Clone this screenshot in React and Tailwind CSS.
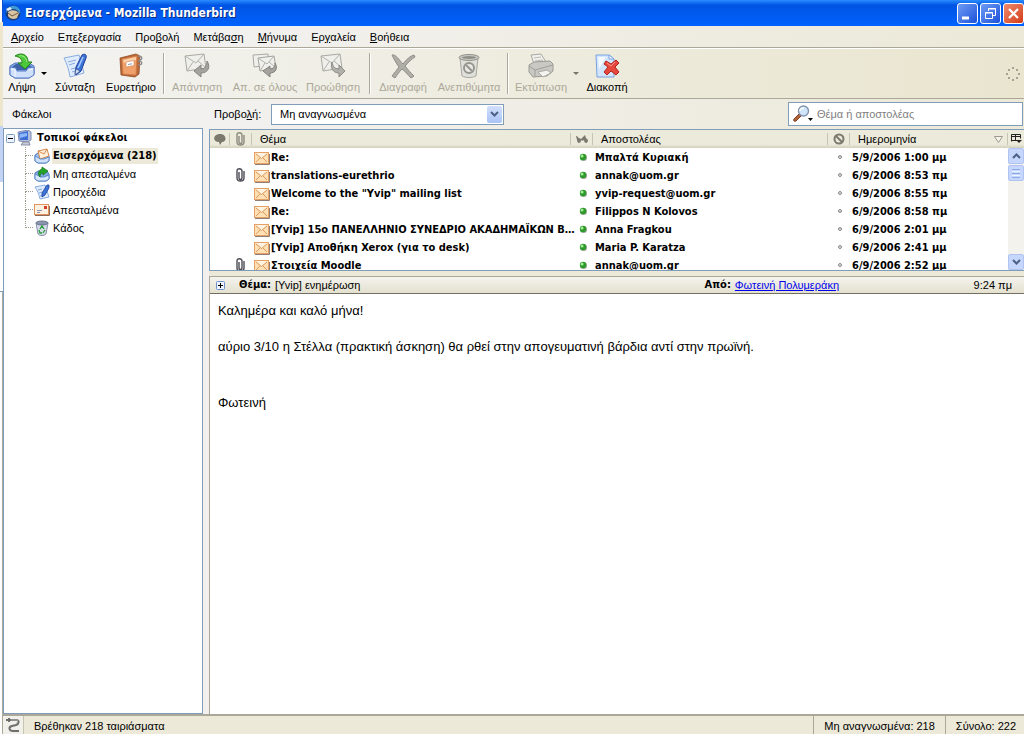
import React from "react";

const menuItems = [
  { before: "", key: "Α", after: "ρχείο" },
  { before: "Επ", key: "ε", after: "ξεργασία" },
  { before: "Προ", key: "β", after: "ολή" },
  { before: "Μετάβα", key: "σ", after: "η" },
  { before: "", key: "Μ", after: "ήνυμα" },
  { before: "Ερ", key: "γ", after: "αλεία" },
  { before: "", key: "Β", after: "οήθεια" },
];

const messages = [
  { id: 1, clip: false, subject: "Re:", sender: "Μπαλτά Κυριακή", date: "5/9/2006 1:00 μμ" },
  { id: 2, clip: true, subject: "translations-eurethrio", sender: "annak@uom.gr", date: "6/9/2006 8:53 πμ" },
  { id: 3, clip: false, subject: 'Welcome to the "Yvip" mailing list', sender: "yvip-request@uom.gr", date: "6/9/2006 8:55 πμ" },
  { id: 4, clip: false, subject: "Re:", sender: "Filippos N Kolovos", date: "6/9/2006 8:58 πμ" },
  { id: 5, clip: false, subject: "[Yvip] 15ο ΠΑΝΕΛΛΗΝΙΟ ΣΥΝΕΔΡΙΟ ΑΚΑΔΗΜΑΪΚΩΝ Β…", sender: "Anna Fragkou", date: "6/9/2006 2:01 μμ" },
  { id: 6, clip: false, subject: "[Yvip] Αποθήκη Xerox (για το desk)", sender: "Maria P. Karatza", date: "6/9/2006 2:41 μμ" },
  { id: 7, clip: true, subject: "Στοιχεία Moodle", sender: "annak@uom.gr", date: "6/9/2006 2:52 μμ" },
];

/* ---------- Toolbar icons, 26x26 ---------- */

const GetMailIcon = () => (
  <svg width="26" height="26" viewBox="0 0 26 26">
    <path d="M1 13 6 10h14l5 3v8l-5 4H6l-5-3z" fill="#86abe4" stroke="#5478c4" />
    <path d="M3 14l4-3h12l4 3-3 3H7z" fill="#3f62a8" />
    <path d="M1 14l6 1 1 3h9l2-3 6-1v8l-5 3H6l-5-3z" fill="#cfe1fa" stroke="#5478c4" />
    <path d="M2 16l4 1v7M20 17l4-1" fill="none" stroke="#f2f8ff" />
    <path d="M6 3c6-4 13-2 13 6h4l-7 7-7-6h4c0-4-2-6-7-7z" fill="#4dc83a" stroke="#23841b" />
    <path d="M10 3c4-1 7 1 8 6" fill="none" stroke="#a3f08c" />
  </svg>
);

const WriteIcon = () => (
  <svg width="26" height="26" viewBox="0 0 26 26">
    <path d="M2 5 17 2l5 18-14 4C7 17 5 11 2 5z" fill="#dfecfd" stroke="#8aaee2" />
    <path d="M6 9l8-2M7 12l6-2M9 16l4-1M10 19l6-2" stroke="#86a8dc" />
    <path d="M20 2c3-2 5 0 4 3l-5 13-5 4-1-1 1-7z" fill="#3c74d8" stroke="#1f3f97" />
    <path d="M21 4l-5 11" stroke="#a8ccff" strokeWidth="1.5" />
    <path d="M14 16l4 2-5 4z" fill="#d6e2f5" stroke="#3a4f8c" strokeWidth=".6" />
  </svg>
);

const AddressBookIcon = () => (
  <svg width="26" height="26" viewBox="0 0 26 26">
    <path d="M2 5 18 1l4 2-1 18-4 3-14-2z" fill="#b9683a" stroke="#954c22" strokeWidth=".8" />
    <path d="M4 6l15-3-1 19-13-1z" fill="#f0a06a" stroke="#d07c45" strokeWidth=".8" />
    <path d="M5 7l13-3v3L6 10z" fill="#fbcfa9" />
    <path d="M8 9l8-1.500v5L8 14z" fill="#fff" stroke="#cf8450" strokeWidth=".6" />
    <path d="M10 11.500l4-.7" stroke="#8f9bb3" />
    <path d="M20 3c5 0 5 4 1 4M20 8c5 0 5 4 0 4" fill="none" stroke="#8c8c8c" strokeWidth="1.3" />
  </svg>
);

const ReplyIcon = () => (
  <svg width="26" height="26" viewBox="0 0 26 26">
    <path d="M1 3 20 1l2 14-19 3z" fill="#efefeb" stroke="#aaa9a3" />
    <path d="M1 3l11 7 8-9M3 18l6-9M22 15l-8-7" fill="none" stroke="#b3b2ac" />
    <path d="M23 8c4 6 1 12-6 12v4l-7-6 7-6v4c4 0 6-3 6-8z" fill="#a4a39d" stroke="#84837e" />
  </svg>
);

const ReplyAllIcon = () => (
  <svg width="26" height="26" viewBox="0 0 26 26">
    <path d="M1 2 16 1l1 11-15 2z" fill="#efefeb" stroke="#aaa9a3" />
    <path d="M6 5 22 3l2 12-16 3z" fill="#f0f0ec" stroke="#a3a29c" />
    <path d="M6 5l9 6 7-8M8 18l5-8M24 15l-7-6" fill="none" stroke="#b3b2ac" />
    <path d="M23 10c3 5 1 10-5 10v4l-7-6 7-5v3c3 0 5-2 5-6z" fill="#a4a39d" stroke="#84837e" />
  </svg>
);

const ForwardIcon = () => (
  <svg width="26" height="26" viewBox="0 0 26 26">
    <path d="M1 3 20 1l2 14-19 3z" fill="#efefeb" stroke="#aaa9a3" />
    <path d="M1 3l11 7 8-9M3 18l6-9M22 15l-8-7" fill="none" stroke="#b3b2ac" />
    <path d="M12 9c-2 6 1 11 7 11v4l6-6-6-6v4c-4 0-6-2-7-7z" fill="#b1b0aa" stroke="#8c8b86" />
  </svg>
);

const DeleteIcon = () => (
  <svg width="26" height="26" viewBox="0 0 26 26">
    <path d="M2 2c4-1 7 5 11 9 3-4 7-8 11-9l1 2c-4 2-7 6-10 9 3 4 6 7 9 10l-3 2c-3-3-6-7-9-9-3 3-5 6-7 9l-3-2c2-3 5-6 7-9C6 10 4 6 2 2z" fill="#aeada6" stroke="#8e8d87" />
  </svg>
);

const JunkIcon = () => (
  <svg width="26" height="26" viewBox="0 0 26 26">
    <path d="M4 5h18l-2 18c-4 2-10 2-14 0z" fill="#e0e0da" stroke="#a8a7a0" />
    <ellipse cx="13" cy="4.500" rx="10" ry="3" fill="#c9c8c2" stroke="#93928b" />
    <ellipse cx="13" cy="4.500" rx="7" ry="1.500" fill="#8f8e87" />
    <circle cx="13" cy="15" r="5" fill="#e9e9e4" stroke="#96958f" strokeWidth="2" />
    <path d="M10 12l6 6" stroke="#96958f" strokeWidth="2" />
  </svg>
);

const PrintIcon = () => (
  <svg width="26" height="26" viewBox="0 0 26 26">
    <path d="M6 11 3 2l10-1 5 8z" fill="#efefeb" stroke="#aaa9a3" />
    <path d="M6 5l7-1M7 8l8-1" stroke="#bcbbb5" />
    <path d="M1 12l5-3 16-1 3 3v7l-6 5-14 1-4-5z" fill="#c9c8c2" stroke="#9b9a94" />
    <path d="M1 13l6 4 18-5M7 17v6" fill="none" stroke="#a09f99" />
    <path d="M10 19l9-2 4 3-8 4z" fill="#f3f3ef" stroke="#aaa9a3" />
  </svg>
);

const StopIcon = () => (
  <svg width="26" height="26" viewBox="0 0 26 26">
    <path d="M2 2h13l5 4v18H3z" fill="#d3e5fd" stroke="#79a3e0" />
    <path d="M4 4h8L5 16z" fill="#f4f9ff" />
    <path d="M15 2v4h5z" fill="#fff" stroke="#79a3e0" />
    <path d="M12 8l5 3 5-4 3 3-4 4 4 5-3 3-5-4-4 4-3-3 4-5-4-3z" fill="#e6473c" stroke="#b3241f" />
    <path d="M13 10l4 3 4-4" fill="none" stroke="#ff9f90" />
  </svg>
);

/* ---------- Small icons ---------- */

const AppIcon = () => (
  <svg width="16" height="16" viewBox="0 0 16 16">
    <circle cx="8" cy="8" r="7.500" fill="#1c3e78" />
    <path d="M1 8c0-5 5-8 9-7 4 1 6 4 5 8-1-3-4-5-7-5S3 5 1 8z" fill="#3f9ad6" />
    <path d="M3 7c3-3 9-2 11 1l-2 5c-3 2-7 1-9-2z" fill="#d8c3a2" />
    <path d="M3 8l4 3 6-3" fill="none" stroke="#705b43" />
    <path d="M1 4l4-2 2 2-4 2z" fill="#e8edf5" />
  </svg>
);

const EnvelopeIcon = () => (
  <svg width="16" height="13" viewBox="0 0 16 13" className="mt-0.5 shrink-0">
    <path d="M1 12.500h14.500V2" fill="none" stroke="#8f7d78" />
    <rect x=".5" y=".5" width="14" height="11" fill="#ffe0b5" stroke="#e5a066" />
    <path d="M2 1h11L7.500 6z" fill="#fff4e2" />
    <path d="M2 2l5.500 4.500L13 2M2 10l4-4M13 10L9 6" fill="none" stroke="#dd9a63" />
  </svg>
);

const ClipIcon = ({ color }) => (
  <svg width="12" height="14" viewBox="0 0 12 14" className="mx-auto block">
    <path d="M4 4v6c0 2 3 2 3 0V3c0-3-5-3-5 0v7c0 4 7 4 7 0V3" fill="none" stroke={color} strokeWidth="1.400" />
  </svg>
);

const ComputerIcon = () => (
  <svg width="16" height="16" viewBox="0 0 16 16">
    <path d="M1 2l10-2 3 2v8l-3 2-9-1z" fill="#b4c0da" stroke="#7d8db4" />
    <path d="M2 3l9-2v9l-8 0z" fill="#3f6fd6" />
    <path d="M3 4l7-1v3L3 8z" fill="#8fb8f8" />
    <path d="M6 12h6l1 3H4z" fill="#c6cbd8" stroke="#8a91a5" />
  </svg>
);

const InboxIcon = () => (
  <svg width="16" height="16" viewBox="0 0 16 16">
    <path d="M1 7l3-2h9l2 3v5l-3 2H4l-3-2z" fill="#9dc0ee" stroke="#5279bd" />
    <path d="M4 3l9-2 2 7-9 3z" fill="#fff0dc" stroke="#d6884c" />
    <path d="M4 3l6 3 3-5" fill="none" stroke="#d6884c" />
    <path d="M1 8l4 2 1 1h4l5-2v4l-3 2H4l-3-2z" fill="#cfe2fa" stroke="#5f8acb" />
  </svg>
);

const OutboxIcon = () => (
  <svg width="16" height="16" viewBox="0 0 16 16">
    <path d="M1 7l3-2h9l2 3v5l-3 2H4l-3-2z" fill="#7ea7dd" stroke="#5279bd" />
    <path d="M1 8l4 2 1 1h4l5-2v4l-3 2H4l-3-2z" fill="#d8e8fc" stroke="#5f8acb" />
    <path d="M8 1l6 4-5 4V7c-2 0-3 1-3 4-3-4-1-7 2-8z" fill="#23a52a" stroke="#117219" strokeWidth=".7" />
  </svg>
);

const DraftsIcon = () => (
  <svg width="16" height="16" viewBox="0 0 16 16">
    <path d="M1 3l10-2 4 12-9 2C5 10 3 6 1 3z" fill="#dfecfd" stroke="#8aaee2" />
    <path d="M4 6l4-1M5 9l3-1M6 12l5-1" stroke="#86a8dc" />
    <path d="M13 1h2v3l-4 7-3 2v-4z" fill="#3c74d8" stroke="#1f3f97" strokeWidth=".8" />
  </svg>
);

const SentIcon = () => (
  <svg width="16" height="16" viewBox="0 0 16 16">
    <path d="M1 13.500h14.500V4" fill="none" stroke="#8f6a5a" />
    <rect x=".5" y="2.500" width="14" height="10" fill="#fff1df" stroke="#e0935c" />
    <rect x="10" y="4" width="3" height="3" fill="#d63c26" />
    <path d="M3 8.500h5M3 10.500h3" stroke="#8a94b2" />
  </svg>
);

const TrashIcon = () => (
  <svg width="16" height="16" viewBox="0 0 16 16">
    <path d="M2 3h12l-2 11c-2 2-6 2-8 0z" fill="#d5dbe8" stroke="#8790aa" />
    <ellipse cx="8" cy="3" rx="6" ry="2" fill="#8a94ad" stroke="#6c7690" />
    <path d="M6 9l2-3 2 3M11 10l-2 3M5 10l1 3h2" fill="none" stroke="#28a038" strokeWidth="1.300" />
  </svg>
);

const SearchIcon = () => (
  <svg width="20" height="18" viewBox="0 0 20 18">
    <path d="M6 9l2 2-5 5c-2 1-3-1-2-2z" fill="#b5643a" stroke="#793d20" />
    <circle cx="10.500" cy="6" r="5" fill="#cfe5fc" stroke="#8293ad" strokeWidth="1.400" />
    <path d="M7 6c0-2 2-3 4-3" fill="none" stroke="#fff" strokeWidth="1.500" />
    <path d="M15 13h5l-2.500 3z" fill="#000" />
  </svg>
);

const PlugIcon = () => (
  <svg width="16" height="16" viewBox="0 0 16 16">
    <path d="M1 3h3M4 1v4M5 3h6c4 0 3 4 0 5l-4 1c-4 1-3 5 1 5h6" fill="none" stroke="#6e6e6c" strokeWidth="2" />
    <path d="M6 3h5c2 0 2 2 0 3" fill="none" stroke="#c4c4c2" strokeWidth=".8" />
  </svg>
);

const Arrow = ({ color }) => (
  <svg width="6" height="3" viewBox="0 0 6 3">
    <path d="M0 0h6L3 3z" fill={color} />
  </svg>
);

const Separator = () => <div className="my-1 w-[2px] shrink-0 border-l border-[#aca899] bg-white" />;

const ToolButton = ({ icon, label, width, disabled }) => (
  <button
    disabled={disabled}
    className={`flex shrink-0 flex-col items-center whitespace-nowrap pt-1 ${width} ${disabled ? "text-[#aca899]" : "text-black"}`}
  >
    {icon}
    <span className="leading-[16px]">{label}</span>
  </button>
);

const WindowButton = ({ label, color, children }) => (
  <button aria-label={label} className={`h-[21px] w-[21px] shrink-0 rounded-[3px] border border-white ${color}`}>
    <svg width="19" height="19" viewBox="0 0 19 19" fill="none" stroke="#fff">
      {children}
    </svg>
  </button>
);

const ScrollButton = ({ label, d }) => (
  <button aria-label={label} className="flex h-4 w-full shrink-0 items-center justify-center rounded-[2px] border border-[#b0c4f4] bg-[#c6d6fc]">
    <svg width="9" height="6" viewBox="0 0 9 6">
      <path d={d} fill="none" stroke="#4d6185" strokeWidth="2" />
    </svg>
  </button>
);

const Folder = ({ icon, name, last, selected }) => (
  <li className="flex h-[18px] items-center">
    <div className="ml-[21px] flex h-full w-2 shrink-0 flex-col">
      <div className="h-[9px] border-b border-l border-dotted border-[#9c9a8c]" />
      {!last && <div className="flex-1 border-l border-dotted border-[#9c9a8c]" />}
    </div>
    <span className="ml-px shrink-0">{icon}</span>
    <span
      className={`ml-0.5 whitespace-nowrap px-px leading-[16px] ${
        selected ? "bg-[#ece9d8] font-['DejaVu_Sans_Condensed',sans-serif] font-bold" : ""
      }`}
    >
      {name}
    </span>
  </li>
);

const HeaderCell = ({ children }) => (
  <th className="h-[18px] p-0 text-left font-normal">
    <div className="flex h-3 items-center border-r border-[#c7c5b2] leading-[12px]">{children}</div>
  </th>
);

const App = () => {
  return (
    <div className="flex h-screen overflow-hidden bg-[#ece9d8] font-['Liberation_Sans',sans-serif] text-[11px] text-black">
      {/* Sliver of the window behind */}
      <div className="flex w-[3px] shrink-0 flex-col">
        <div className="h-[22px] border-r border-[#0c4fd0] bg-white" />
        <div className="h-[104px] bg-[#ece6cc]" />
        <div className="h-[56px] bg-[#c3d3f5]" />
        <div className="h-[110px] border-b border-[#7f9db9] bg-white" />
        <div className="flex-1 border-r border-[#aca899] bg-white" />
      </div>

      <div className="flex min-w-0 flex-1 flex-col">
        {/* Title bar */}
        <header className="flex h-[26px] shrink-0 items-center gap-1 bg-linear-to-b from-[#2b8cff] via-[#0054e3] via-20% to-[#0062ff] pl-[2px]">
          <AppIcon />
          <h1 className="flex-1 font-['DejaVu_Sans_Condensed',sans-serif] text-[12px] font-bold text-white [text-shadow:1px_1px_0_#0a2a80]">
            Εισερχόμενα - Mozilla Thunderbird
          </h1>
          <div className="flex gap-[2px]">
            <WindowButton label="Ελαχιστοποίηση" color="bg-linear-to-br from-[#6f9bf5] to-[#1c4fd8]">
              <path d="M4 14h7" strokeWidth="3" />
            </WindowButton>
            <WindowButton label="Επαναφορά" color="bg-linear-to-br from-[#6f9bf5] to-[#1c4fd8]">
              <path d="M7.500 7V4.500h7v7H12M7 5h8M4.500 8.500h7v6h-7zM4 9h8" />
            </WindowButton>
            <WindowButton label="Κλείσιμο" color="bg-linear-to-br from-[#f08a6c] to-[#d3380f]">
              <path d="M5 5l9 9M14 5l-9 9" strokeWidth="2.200" />
            </WindowButton>
          </div>
        </header>

        {/* Menu bar */}
        <nav className="flex h-[22px] shrink-0 items-center border-b border-[#aca899] bg-linear-to-r from-[#f3f3f5] to-[#ece9d8] pl-px">
          {menuItems.map((item) => (
            <button key={item.after} className="px-[7px] leading-[16px]">
              {item.before}
              <span className="underline">{item.key}</span>
              {item.after}
            </button>
          ))}
        </nav>

        {/* Toolbar */}
        <div className="flex h-[51px] shrink-0 border-y border-t-white border-b-[#aca899] bg-linear-to-r from-[#f3f3f2] via-[#eeecdf] to-[#e9e5cf]">
          <ToolButton icon={<GetMailIcon />} label="Λήψη" width="w-[38px]" />
          <button aria-label="Επιλογές λήψης" className="w-1.5">
            <Arrow color="#000" />
          </button>
          <ToolButton icon={<WriteIcon />} label="Σύνταξη" width="w-14" />
          <ToolButton icon={<AddressBookIcon />} label="Ευρετήριο" width="w-14" />
          <div className="w-1" />
          <Separator />
          <ToolButton icon={<ReplyIcon />} label="Απάντηση" width="w-16" disabled />
          <ToolButton icon={<ReplyAllIcon />} label="Απ. σε όλους" width="w-[72px]" disabled />
          <ToolButton icon={<ForwardIcon />} label="Προώθηση" width="w-16" disabled />
          <div className="w-1" />
          <Separator />
          <ToolButton icon={<DeleteIcon />} label="Διαγραφή" width="w-16" disabled />
          <ToolButton icon={<JunkIcon />} label="Ανεπιθύμητα" width="w-[68px]" disabled />
          <div className="w-1" />
          <Separator />
          <ToolButton icon={<PrintIcon />} label="Εκτύπωση" width="w-16" disabled />
          <button aria-label="Επιλογές εκτύπωσης" disabled className="w-1.5">
            <Arrow color="#77756a" />
          </button>
          <ToolButton icon={<StopIcon />} label="Διακοπή" width="w-14" />
          <div className="flex flex-1 items-center justify-end pr-1">
            <svg width="14" height="14" viewBox="0 0 14 14" fill="#a5a294">
              <path d="M6 0h2v2H6zM6 12h2v2H6zM0 6h2v2H0zM12 6h2v2h-2zM2 2h2v2H2zM10 2h2v2h-2zM2 10h2v2H2zM10 10h2v2h-2z" />
            </svg>
          </div>
        </div>

        {/* Folders and messages */}
        <div className="flex min-h-0 flex-1 bg-linear-to-r from-[#f3f3f5] to-[#ece9d8]">
          <aside className="flex w-[200px] shrink-0 flex-col">
            <h2 className="h-[29px] shrink-0 pl-[9px] leading-[30px]">Φάκελοι</h2>
            <div className="flex-1 border border-[#7f9db9] bg-white">
              <div className="flex h-[18px] items-center pl-[2px]">
                <svg width="9" height="9" viewBox="0 0 9 9" className="mr-0.5 shrink-0">
                  <rect x=".5" y=".5" width="8" height="8" rx="1" fill="#eef3fd" stroke="#7f9db9" />
                  <path d="M2 4.500h5" stroke="#000" />
                </svg>
                <ComputerIcon />
                <span className="ml-1 font-['DejaVu_Sans_Condensed',sans-serif] font-bold">Τοπικοί φάκελοι</span>
              </div>
              <ul>
                <Folder icon={<InboxIcon />} name="Εισερχόμενα (218)" selected />
                <Folder icon={<OutboxIcon />} name="Μη απεσταλμένα" />
                <Folder icon={<DraftsIcon />} name="Προσχέδια" />
                <Folder icon={<SentIcon />} name="Απεσταλμένα" />
                <Folder icon={<TrashIcon />} name="Κάδος" last />
              </ul>
            </div>
          </aside>

          <main className="ml-1.5 flex min-w-0 flex-1 flex-col">
            {/* View and search */}
            <div className="flex h-[30px] shrink-0 items-center pl-[5px]">
              <label htmlFor="view" className="w-[57px]">
                Προβο<span className="underline">λ</span>ή:
              </label>
              <div className="flex h-[21px] w-[233px] items-center border border-[#7f9db9] bg-white pr-px">
                <select id="view" className="h-full min-w-0 flex-1 appearance-none bg-white pl-2 outline-none">
                  <option>Μη αναγνωσμένα</option>
                </select>
                <span className="flex h-[17px] w-[15px] items-center justify-center rounded-[2px] bg-linear-to-b from-[#d3e0fd] to-[#a9c3f5]">
                  <svg width="9" height="6" viewBox="0 0 9 6">
                    <path d="M1 1l3.500 3.500L8 1" fill="none" stroke="#4d6185" strokeWidth="2" />
                  </svg>
                </span>
              </div>
              <div className="ml-auto mr-px flex h-6 w-[235px] items-center border border-[#7f9db9] bg-white pl-1">
                <SearchIcon />
                <input
                  type="text"
                  aria-label="Αναζήτηση"
                  placeholder="Θέμα ή αποστολέας"
                  className="ml-1 min-w-0 flex-1 outline-none placeholder:text-[#808080]"
                />
              </div>
            </div>

            {/* Message list */}
            <div className="flex h-[142px] shrink-0 border-y border-l border-[#7f9db9] bg-white">
              <div className="min-w-0 flex-1 overflow-hidden">
                <table className="w-full table-fixed border-collapse">
                  <colgroup>
                    <col className="w-[20px]" />
                    <col className="w-[22px]" />
                    <col />
                    <col className="w-[22px]" />
                    <col className="w-[235px]" />
                    <col className="w-[22px]" />
                    <col className="w-[158px]" />
                  </colgroup>
                  <thead className="bg-linear-to-b from-[#ebeadb] from-80% to-[#d3cfba]">
                    <tr>
                      <HeaderCell>
                        <svg width="12" height="11" viewBox="0 0 12 11" className="mx-auto" aria-label="Νήμα">
                          <path d="M6 0c7 0 7 8 2 8l-2 3-1-3C-2 8-1 0 6 0z" fill="#7b796d" />
                        </svg>
                      </HeaderCell>
                      <HeaderCell>
                        <ClipIcon color="#8c8a7e" />
                      </HeaderCell>
                      <HeaderCell>
                        <span className="pl-2">Θέμα</span>
                      </HeaderCell>
                      <HeaderCell>
                        <svg width="12" height="9" viewBox="0 0 12 9" className="mx-auto" aria-label="Αναγνωσμένο">
                          <path d="M0 1c2 0 2 2 3 2l2 1 2-2 2-2 1 3 2 2c0 4-4 4-4 0-1 1-2 1-3 0 0 4-4 4-4 0z" fill="#7b796d" />
                        </svg>
                      </HeaderCell>
                      <HeaderCell>
                        <span className="pl-2">Αποστολέας</span>
                      </HeaderCell>
                      <HeaderCell>
                        <svg width="12" height="12" viewBox="0 0 12 12" className="mx-auto" fill="none" stroke="#7b796d" strokeWidth="2" aria-label="Ανεπιθύμητο">
                          <circle cx="6" cy="6" r="4.500" />
                          <path d="M3 3l6 6" />
                        </svg>
                      </HeaderCell>
                      <HeaderCell>
                        <span className="flex-1 pl-2">Ημερομηνία</span>
                        <svg width="9" height="7" viewBox="0 0 9 7" className="mr-1">
                          <path d="M.5.5h8l-4 6z" fill="#f5f4ec" stroke="#9c9a8c" />
                        </svg>
                      </HeaderCell>
                    </tr>
                  </thead>
                  <tbody className="font-['DejaVu_Sans_Condensed',sans-serif] font-bold">
                    {messages.map((message) => (
                      <tr key={message.id} className="h-[18px]">
                        <td className="p-0" />
                        <td className="p-0">{message.clip && <ClipIcon color="#4b4b55" />}</td>
                        <td className="p-0 pl-[2px]">
                          <div className="flex items-center gap-px">
                            <EnvelopeIcon />
                            <span className="whitespace-nowrap pt-0.5 leading-[16px]">{message.subject}</span>
                          </div>
                        </td>
                        <td className="p-0 pl-[2px]">
                          <svg width="8" height="8" viewBox="0 0 8 8" className="mx-auto block">
                            <circle cx="4.500" cy="4.500" r="3.500" fill="#9aa59a" />
                            <circle cx="4" cy="4" r="3.200" fill="#2e9a2b" />
                            <circle cx="3" cy="3" r="1.500" fill="#a6ec9b" />
                          </svg>
                        </td>
                        <td className="truncate p-0 pl-[2px] pt-0.5 leading-[16px]">{message.sender}</td>
                        <td className="p-0 pl-[2px]">
                          <svg width="4" height="4" viewBox="0 0 4 4" className="mx-auto block">
                            <circle cx="2" cy="2" r="1.500" fill="#ddd" stroke="#888" />
                          </svg>
                        </td>
                        <td className="whitespace-nowrap p-0 pl-[2px] pt-0.5 leading-[16px]">{message.date}</td>
                      </tr>
                    ))}
                  </tbody>
                </table>
              </div>
              <div className="flex w-4 shrink-0 flex-col bg-[#f3f2ec]">
                <button aria-label="Επιλογή στηλών" className="flex h-[18px] shrink-0 items-center justify-center bg-linear-to-b from-[#ebeadb] from-80% to-[#d3cfba]">
                  <svg width="11" height="10" viewBox="0 0 11 10" fill="none" stroke="#222">
                    <path d="M.5 7.500v-7h9v4M0 2.500h10M4.500 1v6M0 6.500h6" />
                    <path d="M5 6h6L8 9z" fill="#222" stroke="none" />
                  </svg>
                </button>
                <ScrollButton label="Πάνω" d="M1 5l3.500-3.500L8 5" />
                <div className="mt-px flex h-4 flex-col items-center justify-center gap-px rounded-[2px] border border-[#b0c4f4] bg-[#c6d6fc]">
                  <div className="h-px w-2 bg-[#8caae6]" />
                  <div className="h-px w-2 bg-[#eef4fe]" />
                  <div className="h-px w-2 bg-[#8caae6]" />
                  <div className="h-px w-2 bg-[#eef4fe]" />
                  <div className="h-px w-2 bg-[#8caae6]" />
                </div>
                <div className="flex-1" />
                <ScrollButton label="Κάτω" d="M1 1l3.500 3.500L8 1" />
              </div>
            </div>

            {/* Message */}
            <div className="h-[5px] shrink-0 bg-[#ece9d8]" />
            <article className="flex min-h-0 flex-1 flex-col border-l border-t border-[#aca899] bg-white">
              <div className="flex h-[17px] shrink-0 items-center border-b border-[#716f64] bg-linear-to-b from-[#f4f3ee] to-[#e4e1cf]">
                <button aria-label="Ανάπτυξη" className="ml-1.5">
                  <svg width="9" height="9" viewBox="0 0 9 9">
                    <rect x=".5" y=".5" width="8" height="8" rx="1" fill="#eef3fd" stroke="#6f8fd0" />
                    <path d="M2 4.500h5M4.500 2v5" stroke="#000" />
                  </svg>
                </button>
                <b className="ml-3.5 mr-1 font-['DejaVu_Sans_Condensed',sans-serif]">Θέμα:</b>
                <span className="flex-1">[Yvip] ενημέρωση</span>
                <b className="mr-1 font-['DejaVu_Sans_Condensed',sans-serif]">Από:</b>
                <a href="#sender" className="text-[#0000ee] underline">
                  Φωτεινή Πολυμεράκη
                </a>
                <span className="w-[185px] pr-3 text-right">9:24 πμ</span>
              </div>
              <div className="flex-1 px-2 pt-2 text-[13px] leading-[18px]">
                <p>Καλημέρα και καλό μήνα!</p>
                <p className="mt-[18px]">
                  αύριο 3/10 η Στέλλα (πρακτική άσκηση) θα ρθεί στην απογευματινή βάρδια αντί στην πρωϊνή.
                </p>
                <p className="mt-[38px]">Φωτεινή</p>
              </div>
            </article>
          </main>
        </div>

        {/* Status bar */}
        <footer className="flex h-5 shrink-0 items-center border-t-2 border-[#aca899] bg-[#ece9d8]">
          <div className="flex h-full w-[21px] items-center justify-center border-r border-[#c7c5b2] bg-[#f1f0ea]">
            <PlugIcon />
          </div>
          <div className="flex h-full flex-1 items-center pl-2.5 pt-0.5">Βρέθηκαν 218 ταιριάσματα</div>
          <div className="flex h-full items-center border-l border-[#aca899] px-2.5 pt-0.5">Μη αναγνωσμένα: 218</div>
          <div className="flex h-full items-center border-l border-[#aca899] pl-2.5 pr-2 pt-0.5">Σύνολο: 222</div>
        </footer>
      </div>
    </div>
  );
};

export default App;
